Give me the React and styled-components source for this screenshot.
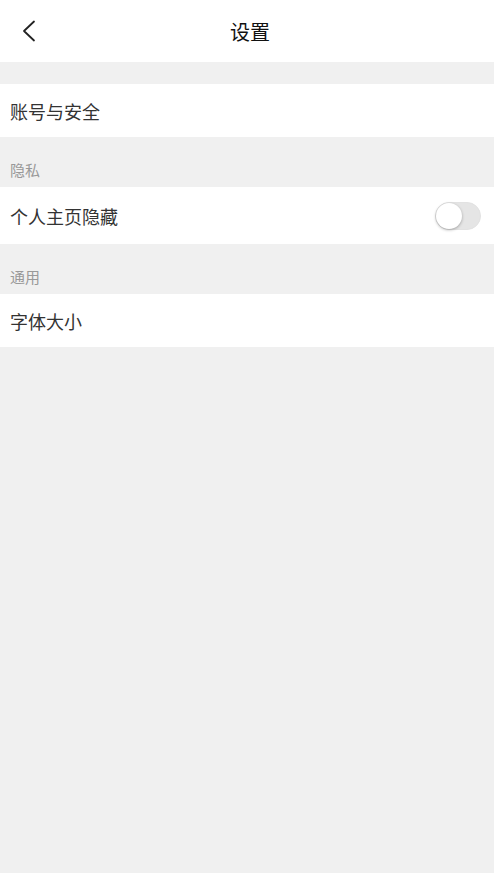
import React, { useState } from 'react'
import styled, { createGlobalStyle } from 'styled-components'

const GlobalStyle = createGlobalStyle`
    html, body {
        margin: 0;
        padding: 0;
        background: #f0f0f0;
        font-family: "Noto Sans CJK SC", "Noto Sans", sans-serif;
    }
`

const Page = styled.div`
    min-height: 873px;
    background: #f0f0f0;
    display: flex;
    flex-direction: column;
`

const Header = styled.header`
    height: 62px;
    background: #fff;
    display: grid;
    grid-template-columns: 60px 1fr 60px;
    align-items: center;
`

const Back = styled.button`
    border: none;
    background: transparent;
    padding: 0 0 0 20px;
    height: 100%;
    display: flex;
    align-items: center;
    cursor: pointer;
`

const Title = styled.h1`
    margin: 0;
    padding-left: 6px;
    font-size: 20px;
    font-weight: 400;
    color: #111;
    text-align: center;
`

const Spacer = styled.div`
    height: 22px;
`

const Row = styled.div`
    background: #fff;
    height: ${p => p.$tall ? 57 : 53}px;
    padding: 0 13px 0 10px;
    display: flex;
    align-items: center;
    justify-content: space-between;
    font-size: 18px;
    color: #333;
`

const SectionLabel = styled.div`
    height: 50px;
    padding: 0 10px 7px;
    box-sizing: border-box;
    display: flex;
    align-items: flex-end;
    font-size: 15px;
    color: #999;
`

const Track = styled.button`
    position: relative;
    width: 46px;
    height: 28px;
    border-radius: 14px;
    border: 1px solid #e2e2e2;
    background: ${p => p.$on ? '#4cd964' : '#e5e5e5'};
    padding: 0;
    cursor: pointer;
`

const Knob = styled.span`
    position: absolute;
    top: 0;
    left: ${p => p.$on ? '18px' : '0'};
    width: 26px;
    height: 26px;
    border-radius: 50%;
    background: #fff;
    box-shadow: 0 1px 3px rgba(0, 0, 0, 0.3);
`

const Toggle = () => {
    const [on, setOn] = useState(false)
    return (
        <Track $on={on} onClick={() => setOn(!on)}>
            <Knob $on={on} />
        </Track>
    )
}

const App = () => (
    <Page>
        <GlobalStyle />
        <Header>
            <Back>
                <svg width="16" height="22" viewBox="0 0 16 22" fill="none">
                    <path d="M14 1.5 L4 11 L14 20.5" stroke="#222" strokeWidth="1.8" strokeLinecap="round" strokeLinejoin="round" />
                </svg>
            </Back>
            <Title>设置</Title>
            <div />
        </Header>
        <Spacer />
        <Row>账号与安全</Row>
        <SectionLabel>隐私</SectionLabel>
        <Row $tall>
            个人主页隐藏
            <Toggle />
        </Row>
        <SectionLabel>通用</SectionLabel>
        <Row>字体大小</Row>
    </Page>
)

export default App
